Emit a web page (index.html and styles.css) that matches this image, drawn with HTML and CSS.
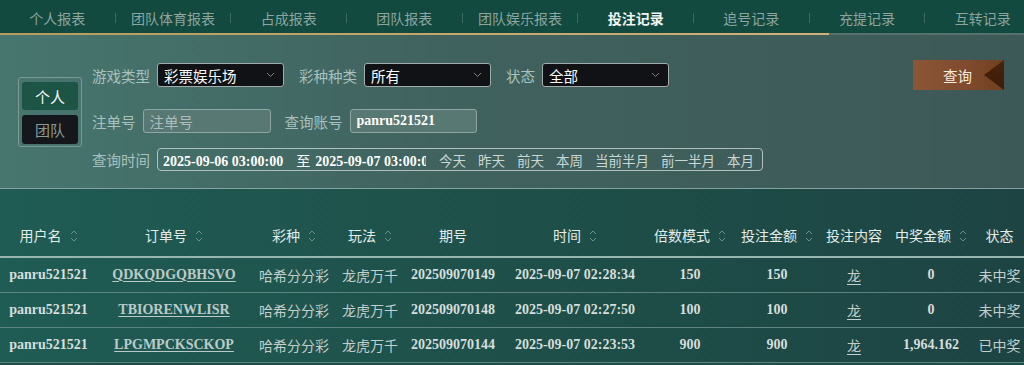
FILE: index.html
```html
<!DOCTYPE html>
<html lang="zh-CN">
<head>
  <meta charset="UTF-8">
  <meta name="viewport" content="width=device-width, initial-scale=1.0">
  <title>投注记录</title>
  <link rel="stylesheet" href="styles.css">
</head>
<body>
  <nav class="tabs">
    <a class="tab">个人报表</a><i class="sep"></i>
    <a class="tab">团队体育报表</a><i class="sep"></i>
    <a class="tab">占成报表</a><i class="sep"></i>
    <a class="tab">团队报表</a><i class="sep"></i>
    <a class="tab">团队娱乐报表</a><i class="sep"></i>
    <a class="tab active">投注记录</a><i class="sep"></i>
    <a class="tab">追号记录</a><i class="sep"></i>
    <a class="tab">充提记录</a><i class="sep"></i>
    <a class="tab">互转记录</a>
  </nav>
  <div class="tabs-line"></div>

  <section class="filter">
    <div class="scope">
      <button class="scope-btn active">个人</button>
      <button class="scope-btn">团队</button>
    </div>

    <div class="fields">
      <div class="row row-top">
        <div class="field">
          <span class="field-label">游戏类型</span>
          <div class="select">彩票娱乐场<svg class="caret" width="9" height="6" viewBox="0 0 9 6"><path d="M1 1l3.5 3.5L8 1" fill="none" stroke="#7d8584" stroke-width="1"/></svg></div>
        </div>
        <div class="field">
          <span class="field-label">彩种种类</span>
          <div class="select">所有<svg class="caret" width="9" height="6" viewBox="0 0 9 6"><path d="M1 1l3.5 3.5L8 1" fill="none" stroke="#7d8584" stroke-width="1"/></svg></div>
        </div>
        <div class="field">
          <span class="field-label">状态</span>
          <div class="select">全部<svg class="caret" width="9" height="6" viewBox="0 0 9 6"><path d="M1 1l3.5 3.5L8 1" fill="none" stroke="#7d8584" stroke-width="1"/></svg></div>
        </div>
      </div>

      <div class="row row-mid">
        <div class="field">
          <span class="field-label">注单号</span>
          <input class="text-input" type="text" placeholder="注单号">
        </div>
        <div class="field">
          <span class="field-label">查询账号</span>
          <input class="text-input account" type="text" value="panru521521">
        </div>
      </div>

      <div class="row row-bottom">
        <div class="field">
          <span class="field-label">查询时间</span>
          <div class="date-box">
            <span class="date-range">2025-09-06 03:00:00<span class="date-to">至</span>2025-09-07 03:00:00</span>
            <div class="quick">
              <a>今天</a><a>昨天</a><a>前天</a><a>本周</a><a>当前半月</a><a>前一半月</a><a>本月</a>
            </div>
          </div>
        </div>
      </div>
    </div>

    <button class="search">查询</button>
  </section>

  <table class="records">
    <colgroup>
      <col style="width: 97px"><col style="width: 154px"><col style="width: 86px"><col style="width: 66px">
      <col style="width: 100px"><col style="width: 144px"><col style="width: 86px"><col style="width: 88px">
      <col style="width: 66px"><col style="width: 88px"><col style="width: 49px">
    </colgroup>
    <thead>
      <tr>
        <th>用户名<svg class="sort" width="8" height="16" viewBox="0 0 8 16"><path d="M1 6l3-3 3 3M1 10l3 3 3-3" fill="none" stroke="#6f8e89" stroke-width="1"/></svg></th>
        <th>订单号<svg class="sort" width="8" height="16" viewBox="0 0 8 16"><path d="M1 6l3-3 3 3M1 10l3 3 3-3" fill="none" stroke="#6f8e89" stroke-width="1"/></svg></th>
        <th>彩种<svg class="sort" width="8" height="16" viewBox="0 0 8 16"><path d="M1 6l3-3 3 3M1 10l3 3 3-3" fill="none" stroke="#6f8e89" stroke-width="1"/></svg></th>
        <th>玩法<svg class="sort" width="8" height="16" viewBox="0 0 8 16"><path d="M1 6l3-3 3 3M1 10l3 3 3-3" fill="none" stroke="#6f8e89" stroke-width="1"/></svg></th>
        <th>期号</th>
        <th>时间<svg class="sort" width="8" height="16" viewBox="0 0 8 16"><path d="M1 6l3-3 3 3M1 10l3 3 3-3" fill="none" stroke="#6f8e89" stroke-width="1"/></svg></th>
        <th>倍数模式<svg class="sort" width="8" height="16" viewBox="0 0 8 16"><path d="M1 6l3-3 3 3M1 10l3 3 3-3" fill="none" stroke="#6f8e89" stroke-width="1"/></svg></th>
        <th>投注金额<svg class="sort" width="8" height="16" viewBox="0 0 8 16"><path d="M1 6l3-3 3 3M1 10l3 3 3-3" fill="none" stroke="#6f8e89" stroke-width="1"/></svg></th>
        <th>投注内容</th>
        <th>中奖金额<svg class="sort" width="8" height="16" viewBox="0 0 8 16"><path d="M1 6l3-3 3 3M1 10l3 3 3-3" fill="none" stroke="#6f8e89" stroke-width="1"/></svg></th>
        <th>状态</th>
      </tr>
    </thead>
    <tbody>
      <tr>
        <td class="num">panru521521</td>
        <td class="num"><a class="order">QDKQDGQBHSVO</a></td>
        <td class="cn">哈希分分彩</td>
        <td class="cn">龙虎万千</td>
        <td class="num">202509070149</td>
        <td class="num">2025-09-07 02:28:34</td>
        <td class="num">150</td>
        <td class="num">150</td>
        <td class="cn"><a class="pick">龙</a></td>
        <td class="num">0</td>
        <td class="cn">未中奖</td>
      </tr>
      <tr>
        <td class="num">panru521521</td>
        <td class="num"><a class="order">TBIORENWLISR</a></td>
        <td class="cn">哈希分分彩</td>
        <td class="cn">龙虎万千</td>
        <td class="num">202509070148</td>
        <td class="num">2025-09-07 02:27:50</td>
        <td class="num">100</td>
        <td class="num">100</td>
        <td class="cn"><a class="pick">龙</a></td>
        <td class="num">0</td>
        <td class="cn">未中奖</td>
      </tr>
      <tr>
        <td class="num">panru521521</td>
        <td class="num"><a class="order">LPGMPCKSCKOP</a></td>
        <td class="cn">哈希分分彩</td>
        <td class="cn">龙虎万千</td>
        <td class="num">202509070144</td>
        <td class="num">2025-09-07 02:23:53</td>
        <td class="num">900</td>
        <td class="num">900</td>
        <td class="cn"><a class="pick">龙</a></td>
        <td class="num">1,964.162</td>
        <td class="cn">已中奖</td>
      </tr>
    </tbody>
  </table>
</body>
</html>
```

FILE: styles.css
```css
* {
  margin: 0;
  padding: 0;
  box-sizing: border-box;
}

body {
  width: 1024px;
  overflow: hidden;
  background-color: #1e4d48;
  font-family: 'Noto Sans CJK SC', 'Noto Sans', sans-serif;
  color: #c6d2cf;
}

.tabs {
  display: flex;
  align-items: center;
  width: 1040px;
  height: 33px;
  background-color: #124a40;
}

.tab {
  flex: 1;
  text-align: center;
  font-size: 14px;
  line-height: 20px;
  color: #8ea49f;
  padding-top: 2px;
  white-space: nowrap;
}

.tab.active {
  color: #f2f5f4;
  font-weight: bold;
}

.sep {
  width: 1px;
  height: 10px;
  margin-top: 3px;
  background-color: #3f6a5f;
}

.tabs-line {
  height: 2px;
  background: linear-gradient(90deg, #b99a60 0, #cfb27a 829px, #56706b 829px);
}

.filter {
  display: flex;
  align-items: flex-start;
  height: 154px;
  padding: 25px 20px 0 18px;
  background: linear-gradient(90deg, #47766f 0%, #40625e 45%, #3d5957 100%);
  border-bottom: 1px solid #86a39e;
}

.scope {
  display: flex;
  flex-direction: column;
  gap: 5px;
  width: 64px;
  margin-top: 17px;
  padding: 4px 3px 2px;
  border: 1px solid #7c9994;
  border-radius: 3px;
}

.scope-btn {
  height: 28px;
  border: none;
  border-radius: 3px;
  font-family: 'Noto Sans CJK SC', sans-serif;
  font-size: 15px;
  color: #8d9996;
  background-color: #14171b;
}

.scope-btn + .scope-btn {
  height: 29px;
}

.scope-btn.active {
  color: #f4f7f6;
  background-color: #1c5446;
}

.fields {
  margin-left: 10px;
  margin-top: 3px;
}

.row {
  display: flex;
  gap: 15px;
}

.row-mid {
  margin-top: 22px;
  gap: 14px;
}

.row-bottom {
  margin-top: 15px;
}

.field {
  display: flex;
  align-items: center;
  gap: 7px;
}

.field-label {
  font-size: 14.5px;
  color: #a9c1bc;
  white-space: nowrap;
}

.select {
  display: flex;
  align-items: center;
  justify-content: space-between;
  width: 127px;
  height: 24px;
  padding: 0 8px 0 6px;
  font-size: 14.5px;
  color: #ffffff;
  background-color: #101216;
  border: 1px solid #a4acab;
  border-radius: 3px;
}

.text-input {
  width: 128px;
  height: 24px;
  padding: 0 6px;
  font-family: 'Noto Sans CJK SC', sans-serif;
  font-size: 14.5px;
  color: #ffffff;
  background-color: #587874;
  border: 1px solid #8ea7a3;
  border-radius: 3px;
  outline: none;
}

.text-input::placeholder {
  color: #aebcb9;
}

.text-input.account {
  width: 127px;
  font-family: 'Liberation Serif', serif;
  font-weight: bold;
  font-size: 14px;
}

.date-box {
  display: flex;
  align-items: center;
  width: 606px;
  height: 23px;
  padding: 0 8px 0 5px;
  border: 1px solid #b1c0bd;
  border-radius: 4px;
}

.date-range {
  width: 264px;
  overflow: hidden;
  white-space: nowrap;
  font-family: 'Liberation Serif', 'Noto Sans CJK SC', serif;
  font-weight: bold;
  font-size: 14px;
  color: #ffffff;
}

.date-to {
  margin: 0 5px 0 13px;
  font-family: 'Noto Sans CJK SC', sans-serif;
  font-weight: normal;
}

.quick {
  display: flex;
  gap: 12px;
  margin-left: 13px;
}

.quick a {
  font-size: 13.5px;
  color: #c9d6d3;
  white-space: nowrap;
  cursor: pointer;
}

.search {
  position: relative;
  overflow: hidden;
  width: 91px;
  height: 30px;
  margin-left: auto;
  padding-right: 2px;
  border: none;
  font-family: 'Noto Sans CJK SC', sans-serif;
  font-size: 14.5px;
  color: #f6ece4;
  background: linear-gradient(90deg, #8b5737 0%, #7f4a2d 60%, #70401f 100%);
  cursor: pointer;
}

.search::after {
  content: '';
  position: absolute;
  top: 0;
  right: 0;
  width: 20px;
  height: 100%;
  background: linear-gradient(180deg, #4a230d, #3c1c0a);
  clip-path: polygon(100% 0, 100% 100%, 0 50%);
}

.records {
  width: 1024px;
  table-layout: fixed;
  border-collapse: collapse;
  background: linear-gradient(90deg, #1f5c54 0%, #1e5049 50%, #1d4443 100%);
}

.records th {
  padding: 36px 0 11px;
  font-size: 14px;
  line-height: 20px;
  font-weight: normal;
  color: #e4ecea;
  white-space: nowrap;
  border-bottom: 2px solid #98b5b0;
}

.sort {
  margin-left: 8px;
  vertical-align: -3px;
}

.records td {
  height: 35px;
  text-align: center;
  line-height: 20px;
  white-space: nowrap;
  border-bottom: 1px solid #5d837e;
}

.records .num {
  font-family: 'Liberation Serif', serif;
  font-weight: bold;
  font-size: 14px;
  color: #d6dedb;
}

.records .cn {
  font-size: 14px;
  color: #c3cfcc;
}

.order {
  color: #bccac7;
  text-decoration: underline;
  text-underline-offset: 2px;
}

.pick {
  color: #c3cfcc;
  text-decoration: underline;
  text-underline-offset: 3px;
}
```
